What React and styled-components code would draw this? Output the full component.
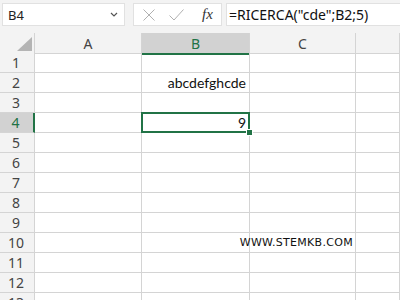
import React from "react";
import styled, { createGlobalStyle } from "styled-components";

const GlobalStyle = createGlobalStyle`
  html, body { margin: 0; padding: 0; background: #fff; }
  body { width: 400px; height: 300px; overflow: hidden; font-family: "Noto Sans", sans-serif; }
`;

const GREEN = "#217346";
const LINE = "#d4d4d4";

const Sheet = styled.div`
  width: 400px;
  height: 300px;
  overflow: hidden;
  display: flex;
  flex-direction: column;
  background: #fff;
`;

const TopBar = styled.div`
  height: 33px;
  flex: none;
  background: #f3f3f3;
  display: flex;
  align-items: flex-start;
  padding: 3px 0 0 2px;
  box-sizing: border-box;
  gap: 8px;
`;

const NameBox = styled.div`
  width: 123px;
  height: 23px;
  box-sizing: border-box;
  background: #fff;
  border: 1px solid #e1e1e1;
  display: flex;
  align-items: center;
  justify-content: space-between;
  padding: 0 6px 0 5px;
  font-size: 13px;
  color: #222;
`;

const Buttons = styled.div`
  width: 89px;
  height: 23px;
  box-sizing: border-box;
  background: #fff;
  border: 1px solid #e1e1e1;
  display: flex;
  align-items: center;
  padding: 0 0 0 9px;
  gap: 14px;
`;

const Fx = styled.span`
  font-family: "Liberation Serif", serif;
  font-style: italic;
  font-size: 15px;
  color: #333;
  margin-left: 4px;
`;

const FormulaInput = styled.div`
  flex: 1;
  height: 23px;
  box-sizing: border-box;
  background: #fff;
  border: 1px solid #e1e1e1;
  border-right: none;
  margin-left: -4px;
  display: flex;
  align-items: center;
  padding-left: 2px;
  font-size: 14px;
  color: #111;
`;

const Row = styled.div`
  display: grid;
  grid-template-columns: 35px 107px 108px 106px 1fr;
  height: 20px;
  flex: none;
`;

const Corner = styled.div`
  background: #f3f3f3;
  border-right: 1px solid ${LINE};
  border-bottom: 1px solid ${LINE};
  box-sizing: border-box;
  display: flex;
  align-items: flex-end;
  justify-content: flex-end;
  padding: 0 2px 2px 0;
`;

const ColHead = styled.div`
  box-sizing: border-box;
  background: ${(p) => (p.$active ? "#d2d2d2" : "#f3f3f3")};
  border-right: 1px solid ${LINE};
  border-bottom: ${(p) => (p.$active ? `2px solid ${GREEN}` : `1px solid ${LINE}`)};
  margin-bottom: ${(p) => (p.$active ? "-1px" : "0")};
  display: flex;
  align-items: center;
  justify-content: center;
  font-size: 14px;
  color: ${(p) => (p.$active ? GREEN : "#444")};
  padding-top: 1px;
`;

const RowHead = styled.div`
  box-sizing: border-box;
  background: ${(p) => (p.$active ? "#d2d2d2" : "#f3f3f3")};
  border-right: ${(p) => (p.$active ? `2px solid ${GREEN}` : `1px solid ${LINE}`)};
  border-bottom: 1px solid ${LINE};
  display: flex;
  align-items: center;
  justify-content: center;
  font-size: 14px;
  color: ${(p) => (p.$active ? GREEN : "#444")};
  padding-right: 2px;
`;

const Cell = styled.div`
  box-sizing: border-box;
  border-right: 1px solid ${LINE};
  border-bottom: 1px solid ${LINE};
  display: flex;
  align-items: center;
  justify-content: ${(p) => (p.$right ? "flex-end" : "flex-start")};
  padding: 0 3px;
  white-space: nowrap;
  overflow: visible;
  font-family: Lato, "Noto Sans", sans-serif;
  font-size: 14px;
  color: #111;
  position: relative;
  ${(p) =>
    p.$selected &&
    `
    &::after {
      content: "";
      position: absolute;
      left: -1px;
      top: -1px;
      right: -1px;
      bottom: -1px;
      border: 2px solid ${GREEN};
    }
    &::before {
      content: "";
      position: absolute;
      right: -4px;
      bottom: -4px;
      width: 5px;
      height: 5px;
      background: ${GREEN};
      border: 1px solid #fff;
      z-index: 2;
    }
  `}
`;

const Watermark = styled.span`
  font-family: "DejaVu Sans", sans-serif;
  font-size: 11px;
  letter-spacing: 0.3px;
  color: #111;
  margin-right: -1px;
`;

const cols = ["A", "B", "C", ""];

const data = {
  2: { B: "abcdefghcde" },
  4: { B: "9" },
  10: { C: "WWW.STEMKB.COM" },
};

export default function App() {
  const rows = Array.from({ length: 13 }, (_, i) => i + 1);
  return (
    <Sheet>
      <GlobalStyle />
      <TopBar>
        <NameBox>
          <span>B4</span>
          <svg width="8" height="5" viewBox="0 0 8 5">
            <path d="M1 1 L4 4 L7 1" fill="none" stroke="#555" strokeWidth="1.2" />
          </svg>
        </NameBox>
        <Buttons>
          <svg width="12" height="12" viewBox="0 0 12 12">
            <path d="M0.5 0.5 L11.5 11.5 M11.5 0.5 L0.5 11.5" stroke="#b0b0b0" strokeWidth="1" />
          </svg>
          <svg width="15" height="12" viewBox="0 0 15 12">
            <path d="M0.5 6.5 L5 11 L14.5 0.5" fill="none" stroke="#b0b0b0" strokeWidth="1" />
          </svg>
          <Fx>fx</Fx>
        </Buttons>
        <FormulaInput>=RICERCA("cde";B2;5)</FormulaInput>
      </TopBar>
      <Row>
        <Corner>
          <svg width="15" height="14" viewBox="0 0 15 14">
            <path d="M15 0 L15 14 L0 14 Z" fill="#b4b4b4" />
          </svg>
        </Corner>
        {cols.map((c, i) => (
          <ColHead key={i} $active={c === "B"}>
            {c}
          </ColHead>
        ))}
      </Row>
      {rows.map((r) => (
        <Row key={r}>
          <RowHead $active={r === 4}>{r}</RowHead>
          {cols.map((c, i) => {
            const v = data[r] && data[r][c];
            return (
              <Cell key={i} $right={r === 10 || r === 4 || r === 2} $selected={r === 4 && c === "B"}>
                {r === 10 && v ? <Watermark>{v}</Watermark> : v}
              </Cell>
            );
          })}
        </Row>
      ))}
    </Sheet>
  );
}
